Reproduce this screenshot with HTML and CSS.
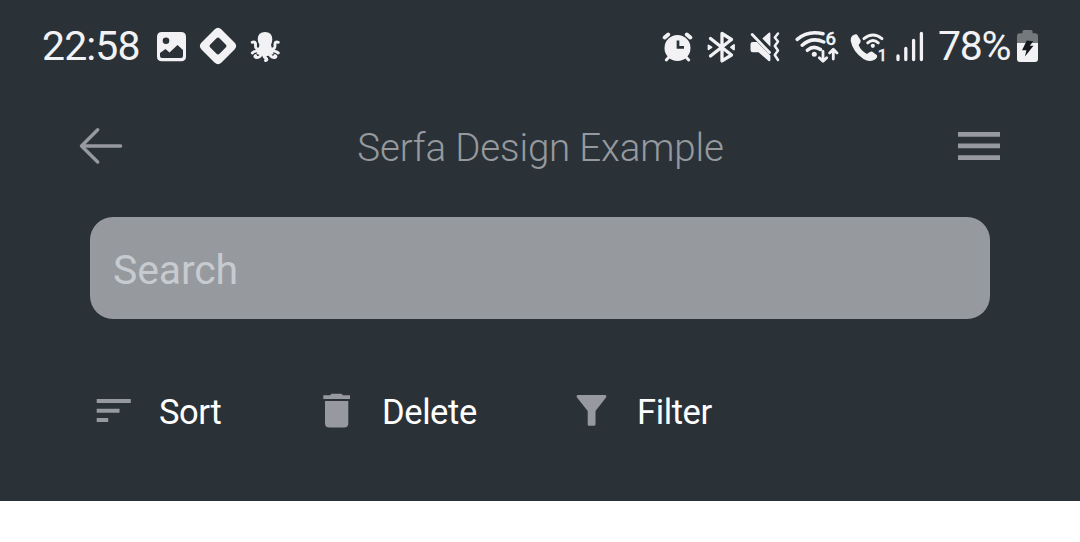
FILE: index.html
```html
<!DOCTYPE html>
<html lang="en">
<head>
<meta charset="utf-8">
<title>Serfa Design Example</title>
<link rel="stylesheet" href="styles.css">
</head>
<body>
<main class="screen">
  <div class="status">
    <span class="clock">22:58</span>
    <div class="notifications">
      <svg width="31" height="36" viewBox="156 28 31 36"><path class="solid" fill-rule="evenodd" d="M162 32H181Q186 32 186 37V56.5Q186 61.3 181 61.3H162Q157 61.3 157 56.5V37Q157 32 162 32ZM169.3 40.8A3.3 3.3 0 1 0 162.7 40.8A3.3 3.3 0 1 0 169.3 40.8ZM160 56V53L165.5 49L169.5 52.5L177.5 45L183 50V56Q183 58 181 58H162Q160 58 160 56Z"/></svg>
      <svg width="38" height="40" viewBox="199 26 38 40"><path class="solid" fill-rule="evenodd" d="M214.5 29.5Q218 26.2 221.5 29.5L234.5 42.5Q237.8 46 234.5 49.5L221.5 62.5Q218 65.8 214.5 62.5L201.5 49.5Q198.200 46 201.5 42.5ZM216.500 38.300L210.300 44.500Q208.800 46 210.300 47.500L216.500 53.700Q218 55.200 219.500 53.700L225.700 47.500Q227.200 46 225.700 44.500L219.500 38.300Q218 36.800 216.500 38.300Z"/></svg>
      <svg width="32" height="36" viewBox="249 28 32 36"><path class="solid" d="M257.700 39Q258 32 265 32Q272 32 272.300 39Q272.300 42 271 45L273.500 54L266 56.500L256.500 54L259.500 45Q257.700 42 257.700 39Z"/><g class="line" stroke-width="2.9"><path d="M260 49Q255 50 255.500 45Q256 41 252.200 42.300M270 49Q275.500 50 275 45Q274.500 41 278.300 42.300M260 51Q254.500 50.500 252.300 53M270 51Q276 50.500 278.300 53M261 52Q261.500 58 256 57.500Q254 56.800 255.500 55.500M269 52Q270 58 275 57.500Q277 56.500 275 55.500M264 53Q263 57 266 58Q268 60 265.500 60.500"/></g></svg>
    </div>
    <div class="system">
      <svg class="alarm" width="32" height="36" viewBox="662 28 32 36"><circle class="solid" cx="677.5" cy="48" r="13"/><g class="line"><path stroke-width="4" d="M664.7 37.5L668.2 34.5M686.8 34.5L690.3 37.5"/><path stroke-width="3" d="M669 57L666.3 60M686 57L688.7 60"/></g><path fill="none" stroke="#2a3238" stroke-width="2.7" d="M678 40.5V47.3H684"/></svg>
      <svg class="bluetooth" width="30" height="36" viewBox="707 28 30 36"><path class="line" stroke-width="3.3" d="M710.5 38.500L731.500 55L722 60.800V33.500L731.500 39.500L710.500 56"/><path class="solid" d="M708.500 45.500L711.500 47.200L708.500 49.200ZM734 45L731 47.200L734 49.500Z" stroke="#f2f2f4" stroke-width="1.8" stroke-linejoin="round"/></svg>
      <svg class="mute" width="32" height="36" viewBox="750 28 32 36"><path class="solid" d="M762.3 38.5L768.8 32.8Q770.4 31.7 770.4 33.5V46.8ZM752.8 42H757L770.4 55.5V60.3Q770 62 768.3 60.7L758.5 52.3H752.8Q750.5 52.3 750.5 50V44.3Q750.5 42 752.8 42Z"/><g class="line"><path stroke-width="2.8" d="M752.2 34.5L769.5 52.5"/><path stroke-width="2.5" d="M778 33.500L774.800 37.500L778 41.500L774.800 46L778 50.500L774.800 55L778 60"/></g></svg>
      <svg class="wifi" width="45" height="40" viewBox="795 26 45 40"><g class="line" stroke-width="3.5"><path d="M797.200 39.300Q808 30 823 33.800M802.200 45.200Q812 36.500 823.800 42M807.400 50.300Q813.500 44.800 820.500 49.500"/><path stroke-width="2.8" d="M823 51.500V61M819.300 57.700L823 61.300L826.700 57.700M833.300 59V49.500M829.600 53L833.300 49.300L837 53"/></g><circle class="solid" cx="814.3" cy="54.3" r="2.5"/><text x="825.6" y="45.3" class="badge-text">6</text></svg>
      <svg class="call" width="38" height="40" viewBox="850 26 38 40"><path class="solid" d="M852 36Q855 33.5 857 34.5L860.500 40Q861.300 42 858.600 45Q861 51 867 54Q870 51 872 51.500L877 55.200Q878 58 874 60Q869 62.500 863.500 59Q853 52 850.700 41Q850.500 37.500 852 36Z"/><path class="line" stroke-width="2.9" d="M863.900 38.700Q873 31.300 882 38.700M867.700 42.900Q873 38.200 878.300 42.900"/><circle class="solid" cx="872.8" cy="45.8" r="2.1"/><text x="877.8" y="60.5" class="badge-text small">1</text></svg>
      <svg class="signal" width="30" height="36" viewBox="895 28 30 36"><path class="line" stroke-width="3.3" d="M898 56V59.600M905.800 48.500V59.600M913.600 40.500V59.600M921.400 33.500V59.600"/></svg>
      <span class="percent">78%</span>
      <svg class="battery" width="23" height="38" viewBox="1016 27 23 38"><path fill="#74797c" d="M1017 43V36Q1017 33.3 1020 33.3H1022.5V31.5Q1022.5 30 1024 30H1031Q1032.6 30 1032.6 31.5V33.3H1035Q1038 33.3 1038 36V43Z"/><path class="solid" d="M1017 43H1038V59Q1038 62 1035 62H1020Q1017 62 1017 59Z"/><path fill="#15191c" d="M1026.8 40.5L1033.3 41.2L1029.8 45.8H1033.5L1025 56.5L1026.4 50.2H1022Z"/></svg>
    </div>
  </div>
  <header class="topbar">
    <svg width="44" height="38" viewBox="79 127 44 38"><path fill="none" stroke="#96999e" stroke-width="3.4" stroke-linecap="round" stroke-linejoin="round" d="M97.7 129.7L81.5 146L97.7 162M81.5 146H120.6"/></svg>
    <h1 class="title">Serfa Design Example</h1>
    <svg class="menu" width="42" height="28" viewBox="0 0 42 28"><path d="M0 0H42V4.7H0ZM0 11.5H42V16.2H0ZM0 23.3H42V28H0Z"/></svg>
  </header>
  <div class="search">Search</div>
  <nav class="actions">
    <div class="action sort"><svg width="35" height="36" viewBox="96 393 35 36"><path d="M96.7 399H130.8V403H96.7ZM96.7 408.8H119.5V412.7H96.7ZM96.7 418H108.2V422H96.7Z"/></svg><span>Sort</span></div>
    <div class="action delete"><svg width="28" height="36" viewBox="323 393 28 36"><path d="M323.3 395.2H330L331.5 393.7H341.5L343 395.2H350V399H323.3ZM325 401H348.3V423.5Q348.3 427.6 344 427.6H329.5Q325 427.6 325 423.5Z"/></svg><span>Delete</span></div>
    <div class="action filter"><svg width="31" height="36" viewBox="576 393 31 36"><path d="M577.7 395H605.3Q607 395.5 606.2 397.3L595.5 411V424.5Q595.5 425.7 594 425.7H589Q587.7 425.7 587.7 424.5V411L576.8 397.3Q576 395.5 577.7 395Z"/></svg><span>Filter</span></div>
  </nav>
</main>
</body>
</html>
```
FILE: styles.css
```css
* { box-sizing: border-box; }
body { margin: 0; background: #fff; font-family: Roboto, sans-serif; }
svg { display: block; flex: none; }
.screen { height: 501px; background: #2a3238; overflow: hidden; }
.status { display: flex; align-items: center; height: 92px; padding: 0 41px; color: #f2f2f4; font-size: 41px; line-height: 49px; }
.clock { width: 115px; padding: 1px 0 0 1px; letter-spacing: -0.9px; white-space: nowrap; }
.notifications { display: flex; align-items: center; gap: 12px; }
.system { display: flex; align-items: center; margin-left: auto; }
.solid { fill: #f2f2f4; }
.line { fill: none; stroke: #f2f2f4; stroke-linecap: round; stroke-linejoin: round; }
.badge-text { fill: #f2f2f4; font-size: 18.5px; font-weight: 500; stroke: #f2f2f4; stroke-width: 0.3px; }
.badge-text.small { font-size: 16px; }
.alarm, .bluetooth, .mute { margin-right: 13px; }
.wifi { margin-right: 10px; }
.call { margin-right: 7px; }
.signal { margin-right: 13px; }
.percent { width: 78px; padding-top: 1px; letter-spacing: -1.3px; white-space: nowrap; }
.battery { margin-right: 0; }
.topbar { display: flex; align-items: center; justify-content: space-between; height: 108px; padding: 0 80px 0 79px; }
.title { margin: 4px 0 0; color: #96999e; font-size: 38.5px; font-weight: 300; letter-spacing: -0.15px; line-height: 48px; }
.menu { fill: #96999e; }
.search { width: 900px; height: 102px; margin: 17px auto 0; padding: 2px 23px 0; border-radius: 23px; background: #96999e; color: #c7cbd0; font-size: 41px; letter-spacing: -0.15px; line-height: 102px; }
.actions { display: flex; height: 184px; padding-left: 96px; align-items: center; color: #fff; font-size: 34.5px; line-height: 44px; }
.action { display: flex; align-items: center; letter-spacing: -0.4px; }
.action span { padding-top: 1px; }
.action svg { fill: #96999e; }
.sort { width: 227px; gap: 28px; }
.delete { width: 253px; gap: 31px; }
.filter { gap: 30px; }
```
